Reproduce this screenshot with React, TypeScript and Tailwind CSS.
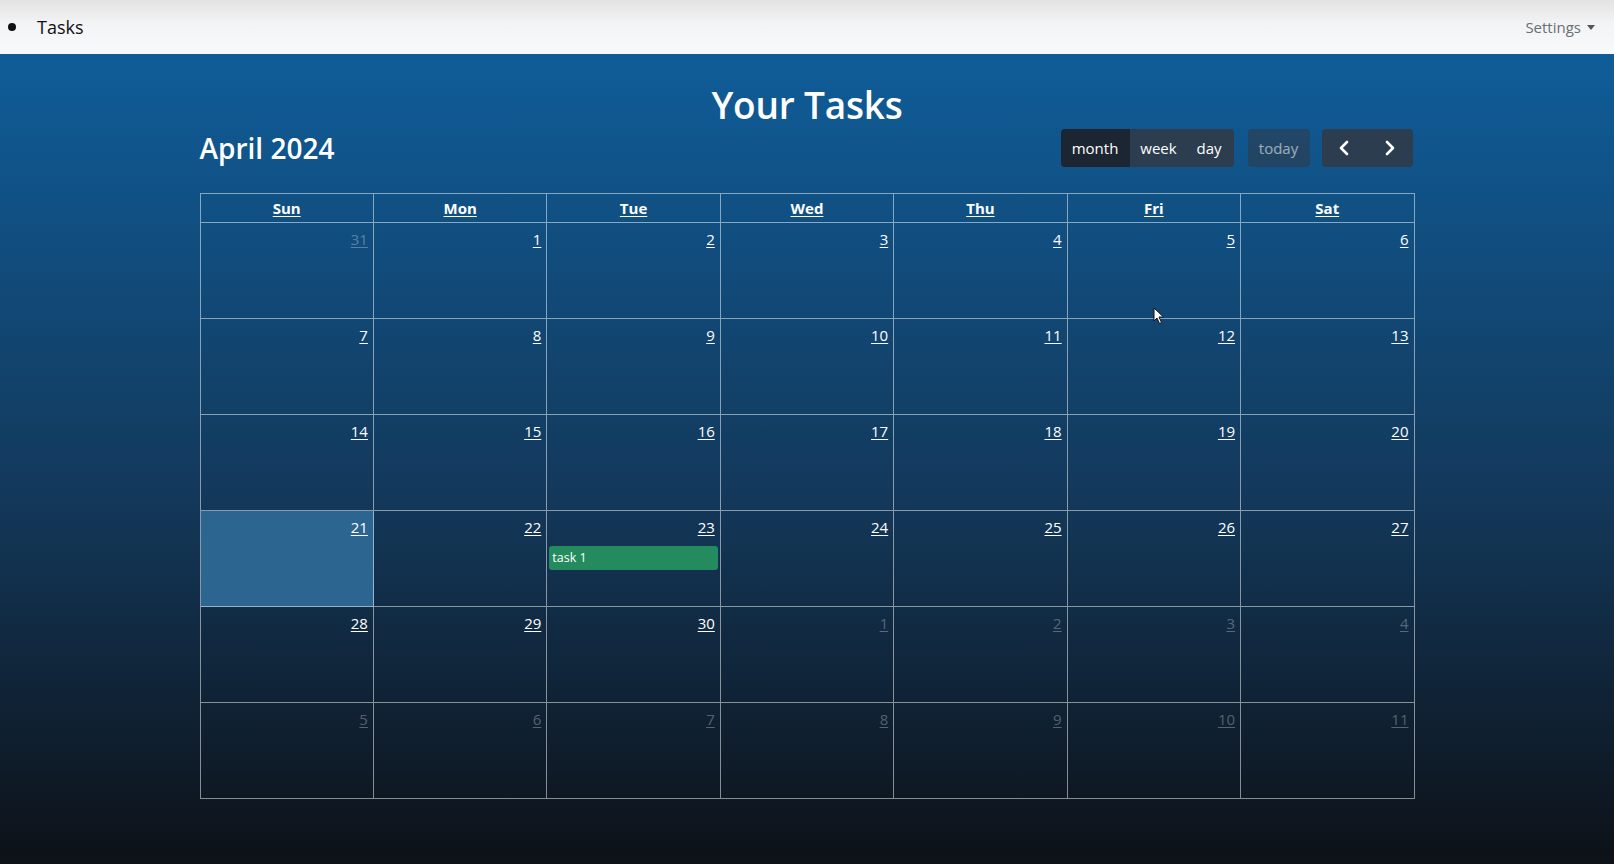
import { ChevronLeft, ChevronRight } from "lucide-react";

type Day = { n: number; other?: boolean; today?: boolean; events?: string[] };

const weekDays = ["Sun", "Mon", "Tue", "Wed", "Thu", "Fri", "Sat"];

// April 2024 month grid, 6 weeks starting Sun Mar 31
function buildDays(): Day[] {
  const days: Day[] = [{ n: 31, other: true }];
  for (let i = 1; i <= 30; i++) {
    days.push({
      n: i,
      today: i === 21,
      events: i === 23 ? ["task 1"] : undefined,
    });
  }
  for (let i = 1; i <= 11; i++) days.push({ n: i, other: true });
  return days;
}

export default function App() {
  const days = buildDays();

  return (
    <div className="min-h-screen flex flex-col font-['Open_Sans','Noto_Sans',sans-serif]">
      {/* Navbar */}
      <nav className="h-[54px] flex items-center justify-between bg-[linear-gradient(to_bottom,#e3e3e3,#f3f4f5_45%,#f8f9fa)] pr-[19px]">
        <ul className="list-none pl-[8px] text-[18px] text-[#111]">
          <li className="flex items-center">
            <span className="w-[8px] h-[8px] rounded-full bg-[#111] mr-[21px]" />
            Tasks
          </li>
        </ul>
        <button className="flex items-center gap-[6px] text-[15px] text-[#6b6f73]">
          Settings
          <span className="w-0 h-0 border-l-[4px] border-r-[4px] border-t-[5px] border-l-transparent border-r-transparent border-t-[#555]" />
        </button>
      </nav>

      {/* Main */}
      <main className="relative flex-1 bg-[linear-gradient(to_bottom,#0f5d99,#13385a_55%,#0d1117)] text-white">
        <h1 className="mt-[28px] text-center text-[37px] font-semibold leading-[46px] tracking-[-0.2px]">
          Your Tasks
        </h1>

        <div className="w-[1215px] mx-auto">
          {/* Toolbar */}
          <div className="flex items-center justify-between h-[38px] mt-px">
            <h2 className="text-[28px] font-semibold leading-none">April 2024</h2>
            <div className="flex items-center pr-[2px]">
              <div className="flex h-[38px] rounded-[4px] overflow-hidden text-[15px]">
                <button className="w-[69px] bg-[#1b2632] text-white">month</button>
                <button className="w-[58px] bg-[#2c3d4f] text-white">week</button>
                <button className="w-[46px] bg-[#2c3d4f] text-white pr-[3px]">day</button>
              </div>
              <button className="ml-[14px] w-[62px] h-[38px] rounded-[4px] bg-[#2c3e50]/65 text-[15px] text-white/55">
                today
              </button>
              <div className="ml-[12px] flex h-[38px] rounded-[4px] overflow-hidden">
                <button className="w-[45px] bg-[#2c3d4f] flex items-center justify-center">
                  <ChevronLeft size={24} strokeWidth={2.6} />
                </button>
                <button className="w-[46px] bg-[#2c3d4f] flex items-center justify-center">
                  <ChevronRight size={24} strokeWidth={2.6} />
                </button>
              </div>
            </div>
          </div>

          {/* Calendar grid */}
          <div className="mt-[26px] grid grid-cols-7 border-l border-t border-white/50">
            {weekDays.map((d) => (
              <div
                key={d}
                className="h-[29px] border-r border-b border-white/50 flex items-center justify-center text-[15px] font-bold underline underline-offset-2"
              >
                {d}
              </div>
            ))}
            {days.map((d, i) => (
              <div
                key={i}
                className={`h-[96px] border-r border-b border-white/50 flex flex-col ${
                  d.today ? "bg-[#2c6690]" : ""
                }`}
              >
                <div
                  className={`pt-[6px] pr-[5px] text-right text-[15px] leading-[20px] underline underline-offset-2 ${
                    d.other ? "text-white/30" : "text-white"
                  }`}
                >
                  {d.n}
                </div>
                {d.events?.map((e) => (
                  <div
                    key={e}
                    className="mt-[9px] mx-[2px] h-[24px] rounded-[3px] bg-[#238b5e] px-[3px] flex items-center text-[12.5px] text-white"
                  >
                    {e}
                  </div>
                ))}
              </div>
            ))}
          </div>
        </div>

        {/* mouse pointer from the capture */}
        <svg
          className="absolute left-[1153px] top-[253px]"
          width="12"
          height="18"
          viewBox="0 0 12 18"
        >
          <path d="M1 1 L1 14 L4 11 L6.5 16.5 L8.5 15.5 L6 10 L10.5 10 Z" fill="#fff" stroke="#111" strokeWidth="1" />
        </svg>
      </main>
    </div>
  );
}
